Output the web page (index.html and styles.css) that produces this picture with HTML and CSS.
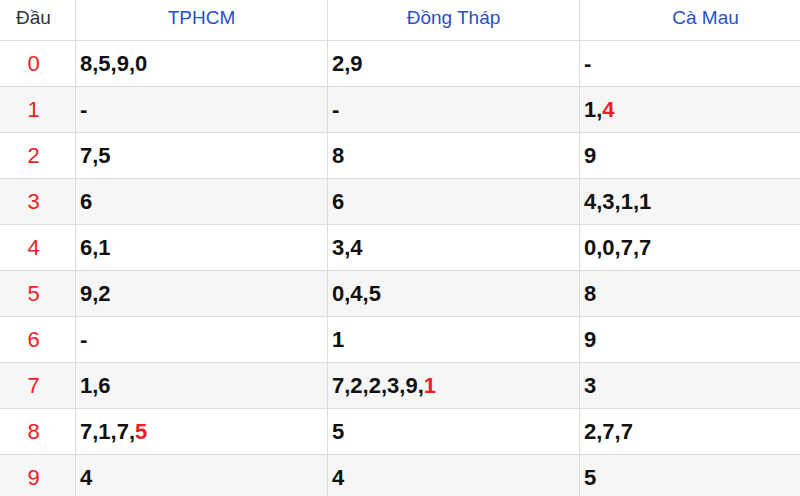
FILE: index.html
```html
<!DOCTYPE html>
<html>
<head>
<meta charset="utf-8">
<link rel="stylesheet" href="styles.css">
</head>
<body>
<div class="wrap">
<table class="loto">
  <colgroup><col class="c-head"><col class="c-prov"><col class="c-prov"><col class="c-prov"></colgroup>
  <thead>
    <tr><th class="h-dau">Đầu</th><th>TPHCM</th><th>Đồng Tháp</th><th>Cà Mau</th></tr>
  </thead>
  <tbody>
    <tr><td class="idx">0</td><td>8,5,9,0</td><td>2,9</td><td>-</td></tr>
    <tr><td class="idx">1</td><td>-</td><td>-</td><td>1,<span class="hl">4</span></td></tr>
    <tr><td class="idx">2</td><td>7,5</td><td>8</td><td>9</td></tr>
    <tr><td class="idx">3</td><td>6</td><td>6</td><td>4,3,1,1</td></tr>
    <tr><td class="idx">4</td><td>6,1</td><td>3,4</td><td>0,0,7,7</td></tr>
    <tr><td class="idx">5</td><td>9,2</td><td>0,4,5</td><td>8</td></tr>
    <tr><td class="idx">6</td><td>-</td><td>1</td><td>9</td></tr>
    <tr><td class="idx">7</td><td>1,6</td><td>7,2,2,3,9,<span class="hl">1</span></td><td>3</td></tr>
    <tr><td class="idx">8</td><td>7,1,7,<span class="hl">5</span></td><td>5</td><td>2,7,7</td></tr>
    <tr><td class="idx">9</td><td>4</td><td>4</td><td>5</td></tr>
  </tbody>
</table>
</div>
</body>
</html>
```
FILE: styles.css
```css
html, body {
  margin: 0;
  padding: 0;
  background: #fff;
  overflow: hidden;
}
body {
  width: 800px;
  height: 496px;
  font-family: "Liberation Sans", Arial, sans-serif;
}
.wrap {
  margin: -6px 0 0 -9px;
  width: 840px;
}
.loto {
  border-collapse: collapse;
  table-layout: fixed;
  width: 840px;
}
.c-head { width: 84px; }
.c-prov { width: 252px; }
.loto th, .loto td {
  border: 1px solid #dcdcdc;
  height: 46px;
  padding: 0 4px;
  box-sizing: border-box;
}
.loto th {
  font-weight: normal;
  font-size: 19px;
  color: #2a50c4;
  text-align: center;
  background: #fff;
}
.loto th.h-dau {
  color: #333;
}
.loto td {
  font-size: 22px;
  font-weight: bold;
  color: #111;
  text-align: left;
}
.loto td.idx {
  font-weight: normal;
  color: #ee1c25;
  text-align: center;
}
.loto tbody tr:nth-child(even) td {
  background: #f6f6f6;
}
.hl {
  color: #ee1c25;
}
```
